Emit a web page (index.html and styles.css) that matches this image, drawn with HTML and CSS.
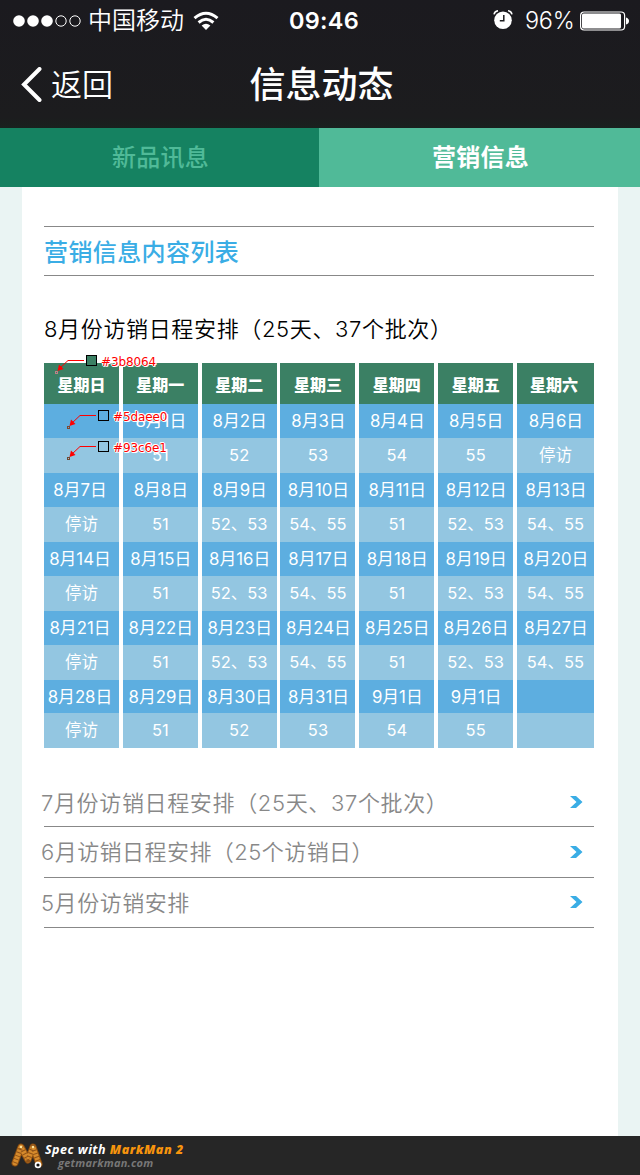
FILE: index.html
```html
<!DOCTYPE html>
<html lang="zh-CN">
<head>
<meta charset="utf-8">
<title>信息动态</title>
<link rel="stylesheet" href="styles.css">
</head>
<body>
<header class="top">
  <div class="status">
    <div class="status-left">
      <svg class="signal" width="68" height="14" viewBox="0 0 68 14"><g fill="#fff"><circle cx="6" cy="7" r="5.8"/><circle cx="20" cy="7" r="5.8"/><circle cx="34" cy="7" r="5.8"/></g><g fill="none" stroke="#fff"><circle cx="48" cy="7" r="5.2"/><circle cx="62" cy="7" r="5.2"/></g></svg>
      <span class="carrier">中国移动</span>
      <svg class="wifi" width="26" height="20" viewBox="0 0 26 20"><g fill="none" stroke="#fff" stroke-width="3"><path d="M1.5 7.2Q13-2.8 24.500 7.200"/><path d="M5.600 11.500Q13 5 20.400 11.500"/></g><path d="M8.600 14.500Q13 11 17.400 14.500L13 19Z" fill="#fff"/></svg>
    </div>
    <span class="time">09:46</span>
    <div class="status-right">
      <svg class="alarm" width="20" height="20" viewBox="0 0 20 20"><circle cx="10" cy="10.300" r="8.800" fill="#fff"/><path d="M1 4.300Q1.700 1.200 5 .700M19 4.300Q18.300 1.200 15 .700" fill="none" stroke="#fff" stroke-width="1.500"/><path d="M10.800 5V10.700H6.800" fill="none" stroke="#1b1b1e" stroke-width="1.500"/></svg>
      <span class="percent">96%</span>
      <svg class="battery" width="50" height="20" viewBox="0 0 50 20"><rect x=".600" y="1" width="44" height="18" rx="3.500" fill="none" stroke="#fff" stroke-width="1.200"/><rect x="2" y="2.500" width="39" height="15" rx="1.500" fill="#fff"/><path d="M46 6.500Q49 7.500 49 10T46 13.500Z" fill="#fff"/></svg>
    </div>
  </div>
  <nav class="nav">
    <a class="back"><svg width="22" height="36" viewBox="0 0 22 36"><path d="M18.500 2L3 17.500L18.500 33" fill="none" stroke="#fff" stroke-width="4" stroke-linecap="round"/></svg><span>返回</span></a>
    <h1 class="title">信息动态</h1>
  </nav>
</header>
<div class="tabs"><a class="tab">新品讯息</a><a class="tab tab-active">营销信息</a></div>
<main class="card">
  <h2 class="heading">营销信息内容列表</h2>
  <h3 class="subject">8月份访销日程安排（25天、37个批次）</h3>
  <section class="schedule">
    <div class="grid">
      <b>星期日</b><b>星期一</b><b>星期二</b><b>星期三</b><b>星期四</b><b>星期五</b><b>星期六</b>
      <i></i><i>8月1日</i><i>8月2日</i><i>8月3日</i><i>8月4日</i><i>8月5日</i><i>8月6日</i>
      <span></span><span>51</span><span>52</span><span>53</span><span>54</span><span>55</span><span>停访</span>
      <i>8月7日</i><i>8月8日</i><i>8月9日</i><i>8月10日</i><i>8月11日</i><i>8月12日</i><i>8月13日</i>
      <span>停访</span><span>51</span><span>52、53</span><span>54、55</span><span>51</span><span>52、53</span><span>54、55</span>
      <i>8月14日</i><i>8月15日</i><i>8月16日</i><i>8月17日</i><i>8月18日</i><i>8月19日</i><i>8月20日</i>
      <span>停访</span><span>51</span><span>52、53</span><span>54、55</span><span>51</span><span>52、53</span><span>54、55</span>
      <i>8月21日</i><i>8月22日</i><i>8月23日</i><i>8月24日</i><i>8月25日</i><i>8月26日</i><i>8月27日</i>
      <span>停访</span><span>51</span><span>52、53</span><span>54、55</span><span>51</span><span>52、53</span><span>54、55</span>
      <i>8月28日</i><i>8月29日</i><i>8月30日</i><i>8月31日</i><i>9月1日</i><i>9月1日</i><i></i>
      <span>停访</span><span>51</span><span>52</span><span>53</span><span>54</span><span>55</span><span></span>
    </div>
    <div class="note note-header"><svg width="48" height="26" viewBox="0 0 48 26"><path d="M6 14L15 5.500H31" fill="none" stroke="red"/><path d="M4.500 16L6 9.500L10.500 14Z" fill="red"/><rect x="2.500" y="16.500" width="2" height="2" fill="none" stroke="#c08088"/><rect x="33.500" y=".500" width="10" height="10" fill="#3b8064" stroke="#000"/></svg><em>#3b8064</em></div>
    <div class="note note-date"><svg width="48" height="26" viewBox="0 0 48 26"><path d="M6 14L15 5.500H31" fill="none" stroke="red"/><path d="M4.500 16L6 9.500L10.500 14Z" fill="red"/><rect x="2.500" y="16.500" width="2" height="2" fill="none" stroke="#804830"/><rect x="33.500" y=".500" width="10" height="10" fill="#5daee0" stroke="#000"/></svg><em>#5daee0</em></div>
    <div class="note note-group"><svg width="48" height="26" viewBox="0 0 48 26"><path d="M6 14L15 5.500H31" fill="none" stroke="red"/><path d="M4.500 16L6 9.500L10.500 14Z" fill="red"/><rect x="2.500" y="16.500" width="2" height="2" fill="none" stroke="#704830"/><rect x="33.500" y=".500" width="10" height="10" fill="#93c6e1" stroke="#000"/></svg><em>#93c6e1</em></div>
  </section>
  <ul class="list">
    <li><span>7月份访销日程安排（25天、37个批次）</span><svg width="13" height="12" viewBox="0 0 13 12"><path d="M0 0H6L12.500 6L6 12H0L6.500 6Z" fill="#3aade5"/></svg></li>
    <li><span>6月访销日程安排（25个访销日）</span><svg width="13" height="12" viewBox="0 0 13 12"><path d="M0 0H6L12.500 6L6 12H0L6.500 6Z" fill="#3aade5"/></svg></li>
    <li><span>5月份访销安排</span><svg width="13" height="12" viewBox="0 0 13 12"><path d="M0 0H6L12.500 6L6 12H0L6.500 6Z" fill="#3aade5"/></svg></li>
  </ul>
</main>
<footer class="footer">
  <svg width="33" height="28" viewBox="0 0 33 28"><g fill="none" stroke-linecap="round" stroke-linejoin="round"><path d="M4 21L10 5L17 18L22 5L28 22" stroke="#8a4c10" stroke-width="7"/><path d="M4 21L10 5L17 18L22 5L28 22" stroke="#d58a2c" stroke-width="5"/><path d="M4 21L10 5L17 18L22 5L28 22" stroke="#8f5217" stroke-width="5" stroke-dasharray="1 2.500" stroke-linecap="butt"/></g><circle cx="10" cy="5" r="1.300" fill="#ffe49a"/><circle cx="22" cy="5" r="1.300" fill="#ffe49a"/><circle cx="27" cy="23" r="3.300" fill="#fff"/><circle cx="27" cy="23" r="1.600" fill="#111"/></svg>
  <div class="credit"><p>Spec with <strong>MarkMan 2</strong></p><p class="site">getmarkman.com</p></div>
</footer>
</body>
</html>
```

FILE: styles.css
```css
* { box-sizing: border-box; margin: 0; padding: 0; }
body { width: 640px; height: 1175px; background: #eaf4f3; font-family: Inter, "Noto Sans CJK SC", sans-serif; display: flex; flex-direction: column; overflow: hidden; }
svg { display: block; flex: none; }
.top { height: 128px; background: linear-gradient(#1b1a1f, #1c1c1e 92%, #19211f); color: #fff; }
.status { height: 41px; display: grid; grid-template-columns: 240px 168px 232px; align-items: center; font-size: 24px; line-height: 40px; }
.status-left { display: flex; align-items: center; padding-left: 13px; }
.carrier { margin-left: 7px; font-weight: 350; }
.wifi { margin-left: 9px; }
.time { text-align: center; font-size: 23.5px; font-weight: 600; letter-spacing: .3px; }
.status-right { display: flex; align-items: center; padding-left: 85px; }
.alarm { margin-top: -1px; }
.percent { margin-left: 12px; width: 55px; font-size: 23.5px; font-weight: 300; letter-spacing: -.3px; white-space: nowrap; }
.nav { height: 87px; display: grid; grid-template-columns: 160px 323px 1fr; align-items: center; }
.back { display: flex; align-items: center; padding-left: 21px; font-size: 31px; font-weight: 350; line-height: 40px; }
.back span { margin-left: 8px; }
.title { text-align: center; font-size: 36px; font-weight: 500; line-height: 44px; }
.tabs { height: 59px; display: grid; grid-template-columns: 319px 321px; grid-template-rows: 59px; text-align: center; font-size: 24px; font-weight: 500; line-height: 58px; }
.tab { padding: 1px 0 0 2px; background: #158261; color: #50ba98; letter-spacing: .3px; }
.tab-active { background: #50ba98; color: #fff; font-weight: 700; }
.card { width: 596px; height: 949px; margin: 0 auto; padding: 39px 24px 0 22px; background: #fff; }
.heading { height: 50px; border-top: 1px solid #888; border-bottom: 1px solid #888; color: #3aade5; font-size: 24px; font-weight: 500; line-height: 51px; letter-spacing: .4px; }
.subject { height: 87px; padding-top: 36px; color: #000; font-size: 22px; font-weight: 350; line-height: 34px; letter-spacing: .65px; white-space: nowrap; }
.schedule { position: relative; }
.grid { display: grid; grid-template-columns: repeat(6, 75px) 77px; column-gap: 3.83px; grid-template-rows: 41px 34px 35px 34px 35px 34px 35px 34px 35px 33px 35px; color: #fff; font-size: 16.500px; text-align: center; line-height: 35px; }
.grid b { background: #3b8064; font-size: 16px; font-weight: 900; line-height: 45px; }
.grid i { padding-left: 1px; background: #5daee0; font-style: normal; font-size: 16.800px; font-weight: 400; line-height: 34px; white-space: nowrap; }
.grid i:nth-child(7n + 1) { padding: 0 3px 0 0; }
.grid b:nth-child(7n) { padding-right: 3px; }
.grid span { background: #93c6e1; font-weight: 400; white-space: nowrap; }
.note { position: absolute; display: flex; align-items: flex-start; color: #f00; font-family: "DejaVu Sans", sans-serif; font-size: 12px; }
.note em { font-style: normal; line-height: 14px; letter-spacing: -.1px; text-shadow: 1px 0 #fff, -1px 0 #fff, 0 1px #fff, 0 -1px #fff, 1px 1px #fff, -1px -1px #fff; }
.note-header { left: 9px; top: -8px; }
.note-date { left: 21px; top: 47px; }
.note-group { left: 21px; top: 78px; }
.list { margin-top: 28px; list-style: none; }
.list li { height: 51px; display: flex; justify-content: space-between; align-items: center; padding: 2px 11px 0 0; border-bottom: 1px solid #888; color: #888; font-size: 22px; font-weight: 350; letter-spacing: .55px; white-space: nowrap; }
.list li:first-child { letter-spacing: .65px; }
.list li:first-child span { margin-top: 2px; }
.list li:nth-child(2) { padding-top: 0; letter-spacing: .45px; }
.list li:last-child { height: 50px; padding-top: 0; }
.list li:last-child svg { margin-top: -1px; }
.list span { margin-left: -3px; line-height: 34px; }
.footer { height: 39px; background: #262626; display: flex; padding: 6px 0 0 11px; }
.credit { padding-top: 1px; font-family: "Open Sans", sans-serif; font-size: 12.5px; font-style: italic; font-weight: 700; line-height: 14px; letter-spacing: .5px; color: #fff; white-space: nowrap; }
.credit p:first-child { padding-left: 1px; }
.credit strong { color: #f7940d; }
.credit .site { padding-left: 14px; color: #777; font-size: 11px; line-height: 12px; letter-spacing: .25px; }
```
